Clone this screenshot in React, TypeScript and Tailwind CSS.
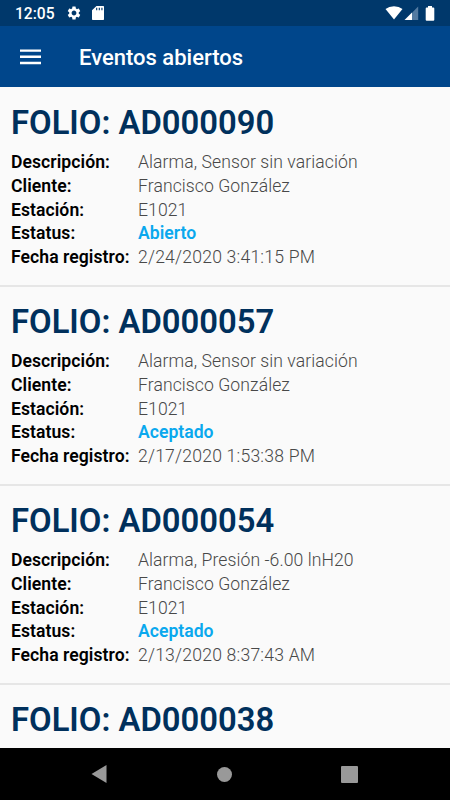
import React from 'react';

interface EventItem {
  folio: string;
  description: string;
  client: string;
  station: string;
  status: string;
  date: string;
}

const EVENTS: EventItem[] = [
  {
    folio: 'AD000090',
    description: 'Alarma, Sensor sin variación',
    client: 'Francisco González',
    station: 'E1021',
    status: 'Abierto',
    date: '2/24/2020 3:41:15 PM',
  },
  {
    folio: 'AD000057',
    description: 'Alarma, Sensor sin variación',
    client: 'Francisco González',
    station: 'E1021',
    status: 'Aceptado',
    date: '2/17/2020 1:53:38 PM',
  },
  {
    folio: 'AD000054',
    description: 'Alarma, Presión -6.00 lnH20',
    client: 'Francisco González',
    station: 'E1021',
    status: 'Aceptado',
    date: '2/13/2020 8:37:43 AM',
  },
];

const VALUE_STYLES = {
  text: 'font-light tracking-[0.07px] text-[#484848]',
  date: 'font-light tracking-[0.2px] text-[#484848]',
  status: 'font-semibold text-[#0aa8ee]',
};

function StatusBar() {
  return (
    <div className="flex h-[26px] shrink-0 items-center bg-[#00386b] pl-[15px] pr-[15px] text-white">
      <span className="w-[51px] pt-[2px] text-[15.6px] leading-[26px] font-medium">12:05</span>
      <svg className="h-4 w-4" viewBox="0 0 24 24" fill="currentColor">
        <path d="M19.14 12.94c.04-.3.06-.61.06-.94 0-.32-.02-.64-.07-.94l2.03-1.58a.49.49 0 0 0 .12-.61l-1.92-3.32a.488.488 0 0 0-.59-.22l-2.39.96c-.5-.38-1.03-.7-1.62-.94l-.36-2.54a.484.484 0 0 0-.48-.41h-3.84c-.24 0-.43.17-.47.41l-.36 2.54c-.59.24-1.13.57-1.62.94l-2.39-.96c-.22-.08-.47 0-.59.22L2.74 8.87c-.12.21-.08.47.12.61l2.03 1.58c-.05.3-.09.63-.09.94s.02.64.07.94l-2.03 1.58a.49.49 0 0 0-.12.61l1.92 3.32c.12.22.37.29.59.22l2.39-.96c.5.38 1.03.7 1.62.94l.36 2.54c.05.24.24.41.48.41h3.84c.24 0 .44-.17.47-.41l.36-2.54c.59-.24 1.13-.56 1.62-.94l2.39.96c.22.08.47 0 .59-.22l1.92-3.32c.12-.22.07-.47-.12-.61l-2.01-1.58zM12 15.6c-1.98 0-3.6-1.62-3.6-3.6s1.62-3.6 3.6-3.6 3.6 1.62 3.6 3.6-1.62 3.6-3.6 3.6z" />
      </svg>
      <svg className="ml-[10px] h-[14px] w-[12px]" viewBox="0 0 16 20" preserveAspectRatio="none" fill="currentColor">
        <path d="M15 0H6L0 6v13q0 1 1 1h14q1 0 1-1V1q0-1-1-1zM7 6H5.5V2.5H7zm3.5 0H9V2.5h1.5zm3.5 0h-1.5V2.5H14z" />
      </svg>
      <div className="ml-auto flex items-center">
        <svg className="h-[14px] w-[18px]" viewBox="0 0 18 14">
          <path fill="#fff" d="M0.5 3Q4 0.3 9 0.3T17.5 3L9 13.6Z" />
        </svg>
        <svg className="ml-[1px] h-[14px] w-[15px]" viewBox="0 0 15 14">
          <path fill="#547ba1" d="M14.2 0.5V14H8V6.7Z" />
          <path fill="#fff" d="M8 6.5V14H0.5Z" />
        </svg>
        <svg className="ml-[6px] h-[15px] w-[10px]" viewBox="0 0 10 15">
          <path fill="#fff" d="M3 0h4v1.6h1.3q1 0 1 1v11.2q0 1-1 1H1.7q-1 0-1-1V2.6q0-1 1-1H3Z" />
        </svg>
      </div>
    </div>
  );
}

function AppBar() {
  return (
    <header className="flex h-[61px] shrink-0 items-center bg-[#00468b] pl-5 text-white">
      <button aria-label="Menu">
        <svg className="h-[16px] w-[21px]" viewBox="0 0 21 16" fill="currentColor">
          <path d="M0 .4h21v2.4H0zM0 6.6h21V9H0zM0 12.8h21v2.4H0z" />
        </svg>
      </button>
      <h1 className="ml-[38px] pt-[3px] text-[22px] leading-[30px] font-medium">Eventos abiertos</h1>
    </header>
  );
}

function Row({ label, value, kind = 'text' }: { label: string; value: string; kind?: keyof typeof VALUE_STYLES }) {
  return (
    <div className="flex h-[23.7px] items-center text-[17.6px] leading-[23.75px]">
      <dt className="w-[127px] font-semibold tracking-[0.05px] whitespace-nowrap text-black">{label}</dt>
      <dd className={VALUE_STYLES[kind]}>{value}</dd>
    </div>
  );
}

function Folio({ value }: { value: string }) {
  return <h2 className="h-[52px] text-[32.8px] leading-[52px] font-semibold text-[#00305c]">FOLIO: {value}</h2>;
}

function EventCard({ event }: { event: EventItem }) {
  return (
    <li className="h-[199px] shrink-0 border-b-2 border-[#e6e6e6] pt-[9px] pl-[11px]">
      <Folio value={event.folio} />
      <dl className="mt-[2.45px]">
        <Row label="Descripción:" value={event.description} />
        <Row label="Cliente:" value={event.client} />
        <Row label="Estación:" value={event.station} />
        <Row label="Estatus:" value={event.status} kind="status" />
        <Row label="Fecha registro:" value={event.date} kind="date" />
      </dl>
    </li>
  );
}

function NavBar() {
  return (
    <nav className="flex h-[52px] shrink-0 items-center bg-black pl-[91px] text-[#999]">
      <svg className="h-[18px] w-4" viewBox="0 0 16 18" fill="currentColor">
        <path d="M0.5 9 15.5 0V18Z" />
      </svg>
      <span className="ml-[110px] h-[15px] w-[15px] rounded-full bg-[#999]" />
      <span className="ml-[109px] h-[17px] w-[17px] rounded-[1px] bg-[#999]" />
    </nav>
  );
}

export default function App() {
  return (
    <div className="flex h-[800px] w-[450px] flex-col overflow-hidden bg-[#fafafa] font-['Roboto',sans-serif]">
      <StatusBar />
      <AppBar />
      <ul className="flex min-h-0 flex-1 flex-col overflow-hidden pt-px">
        {EVENTS.map((event) => (
          <EventCard key={event.folio} event={event} />
        ))}
        <li className="shrink-0 pt-[9px] pl-[11px]">
          <Folio value="AD000038" />
        </li>
      </ul>
      <NavBar />
    </div>
  );
}
